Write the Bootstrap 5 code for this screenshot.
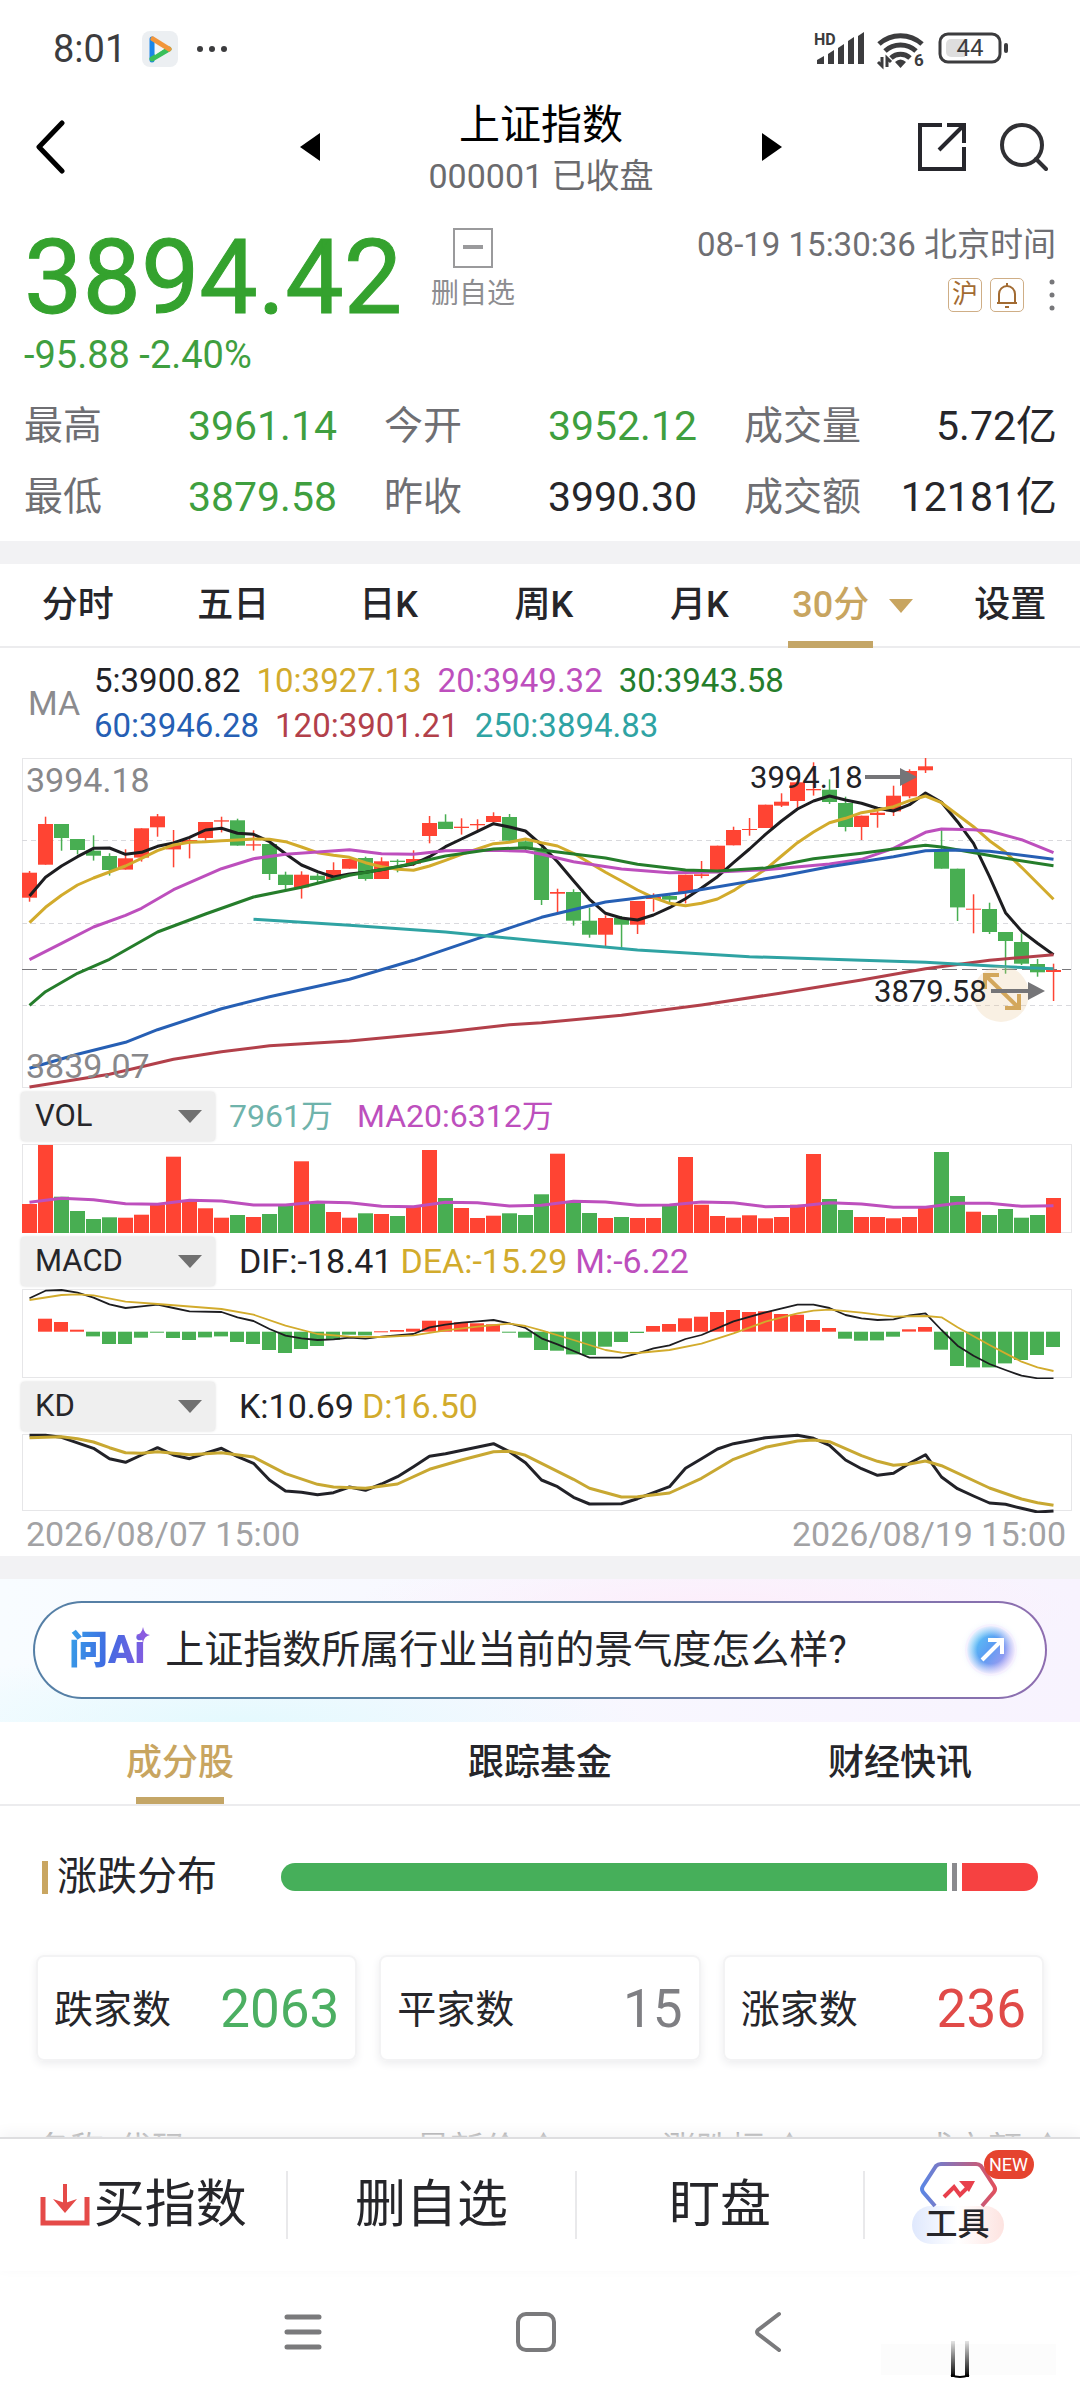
<!DOCTYPE html>
<html lang="zh-CN">
<head>
<meta charset="utf-8">
<meta name="viewport" content="width=device-width, initial-scale=1">
<title>上证指数 000001</title>
<link href="https://cdn.jsdelivr.net/npm/bootstrap@5.3.0/dist/css/bootstrap.min.css" rel="stylesheet">
<style>
  :root { --up:#ff4433; --down:#48ae52; --quote:#34a22e; --gold:#c8a560; --ink:#26262a; --muted2:#6f6f73; }
  body { font-family: Roboto, "Noto Sans CJK SC", sans-serif; color: var(--ink); background: #fff; }
  button, select { font-family: inherit; }
  button { background: none; border: 0; padding: 0; color: inherit; }
  a { color: inherit; text-decoration: none; }
  svg { display: block; }
  .statusbar { height: 98px; padding: 0 70px 0 53px; font-size: 38px; color: #3c3c3e; }
  .statusbar svg { overflow: visible; }
  .topbar { display: grid; grid-template-columns: 1fr 482px 1fr; grid-template-rows: 98px; height: 98px; padding: 0 32px 0 34px; }
  .title-block { padding-top: 4px; }
  .title-main { font-size: 41px; line-height: 54px; color: #000; font-weight: 400; margin: 0; }
  .title-sub { font-size: 34px; line-height: 48px; color: #6b6b6e; }
  .quote { padding: 24px 0 8px; }
  .quote-top { padding: 0 24px; }
  .price { font-size: 104px; line-height: 116px; font-weight: 400; color: var(--quote); -webkit-text-stroke: 1px var(--quote); min-width: 407px; }
  .change { font-size: 38px; line-height: 38px; color: #3f9f3f; }
  .mini-btn { font-size: 28px; line-height: 36px; color: #8d8d90; }
  .stamp { font-size: 33px; line-height: 50px; color: var(--muted2); }
  .tagbox { width: 34px; height: 34px; border: 1px solid #cfae86; border-radius: 5px; color: #a26b32; font-size: 26px; line-height: 30px; }
  .stats { margin-top: 17px; line-height: 71px; }
  .stats .cell { padding: 0 23px 0 24px; font-size: 39px; color: var(--muted2); }
  .stats b { font-weight: 400; font-size: 41px; color: var(--ink); }
  .stats b.dn { color: #3f9f3f; }
  .band { height: 23px; background: #f2f2f4; }
  .tabstrip { height: 84px; border-bottom: 2px solid #ececee; font-size: 36px; font-weight: 500; }
  .tabstrip .tab { flex: 1 1 0; height: 84px; }
  .tabstrip .lbl { height: 84px; line-height: 82px; padding: 0 4px; }
  .tabstrip.wide .tab.lbl { padding: 0; }
  .tabstrip .end { text-indent: 16px; }
  .tabstrip .on { color: var(--gold); border-bottom: 7px solid #c4a667; }
  .tabstrip .short { width: 88px; height: 7px; background: #c4a667; margin-top: -9px; }
  .tri { width: 0; height: 0; border: 12px solid transparent; border-top: 14px solid var(--gold); border-bottom: 0; }
  .legend-row { padding: 10px 28px 9px; line-height: 45px; font-size: 33px; }
  .legend-row .ma { width: 66px; color: #8b8b8e; font-size: 34px; }
  .c5 { color: #222226; } .c10 { color: #d2ab2c; } .c20 { color: #bd4fbd; } .c30 { color: #257d2b; }
  .c60 { color: #265fb4; } .c120 { color: #b2404a; } .c250 { color: #2fa3a3; } .cv { color: #6fb3ab; }
  .ind { height: 54px; padding-left: 21px; font-size: 34px; }
  .ind.tight { font-size: 32px; }
  .picker { position: relative; width: 194px; margin-right: 24px; }
  .tight .picker { margin-right: 14px; }
  .picker .form-select { height: 49px; border: 0; border-radius: 4px; background: #efefef; font-size: 31px; line-height: 40px; padding: 4px 14px; color: var(--ink); box-shadow: 0 0 3px #d8d8d8; appearance: none; }
  .picker::after { content: ""; position: absolute; right: 13px; top: 18px; border: 12px solid transparent; border-top: 13px solid #707070; border-bottom: 0; pointer-events: none; }
  .dates { padding: 0 14px 0 26px; font-size: 34px; line-height: 43px; color: #a2a2a4; }
  .chart text { font-size: 34px; }
  .chart text.note { font-size: 31px; }
  .ai { padding: 22px 33px 23px; background: radial-gradient(ellipse at 22% 100%, #e4f9fe 0, transparent 34%), radial-gradient(ellipse at 66% 20%, #fdeefb 0, transparent 36%), linear-gradient(90deg, #f8fcff, #f8f3fe); }
  .pill { height: 98px; border: 2px solid transparent; border-radius: 49px; background: linear-gradient(#fff, #fff) padding-box, linear-gradient(90deg, #557fa6, #5d87a4 50%, #8e6db0) border-box; padding: 0 22px 0 34px; font-size: 39px; }
  .ailogo { position: relative; font-size: 39px; font-weight: 900; background: linear-gradient(100deg, #36a3e8, #3f6be2 50%, #8a5be0); -webkit-background-clip: text; background-clip: text; color: transparent; margin-right: 20px; }
  .ailogo svg { position: absolute; right: -5px; top: 6px; }
  .dist { padding: 46px 42px 0; font-size: 40px; line-height: 50px; }
  .dist h2 { font-size: 40px; line-height: 50px; font-weight: 400; width: 239px; margin: 0; }
  .dist h2::before { content: ""; display: inline-block; width: 6px; height: 33px; background: #c9a661; margin-right: 9px; vertical-align: -4px; }
  .meter { height: 28px; gap: 5px; margin-right: 0; }
  .meter span { flex-basis: 0; }
  .counts { margin-top: 53px; padding: 0 36px; gap: 22px; }
  .count { flex: 1 1 0; height: 106px; border: 2px solid #f3f3f4; border-radius: 8px; box-shadow: 0 3px 8px #ededef; padding: 4px 16px 0 16px; font-size: 39px; }
  .count strong { font-size: 53px; font-weight: 400; }
  .listhead { margin-top: 63px; padding: 0 10px 0 36px; font-size: 34px; line-height: 50px; color: #77777a; display: grid; grid-template-columns: 380px 246px 1fr 150px; white-space: nowrap; }
  .actions { height: 134px; border-top: 2px solid #dedee0; box-shadow: 0 -4px 14px #f4f4f5; font-size: 51px; position: relative; background: #fff; }
  .actions .act { width: 26.7%; height: 68px; border-right: 2px solid #e9e9eb; }
  .actions .tools { flex: 1 1 0; height: 132px; padding: 0 30px 4px 0; }
  .toolword { width: 92px; height: 38px; border-radius: 19px; background: linear-gradient(90deg, #dfe8fd, #fff 50%, #fde3e0); font-size: 32px; line-height: 36px; font-weight: 500; margin-top: -2px; }
  .toolicon { position: relative; width: 92px; }
  .newtag { position: absolute; left: 72px; top: -12px; width: 50px; height: 29px; border-radius: 15px; background: #e5432f; color: #fff; font-size: 18px; line-height: 29px; }
  .sysnav { height: 129px; gap: 192px; padding: 0 8px 8px 0; position: relative; }
  .smudge { position: absolute; right: 24px; top: 70px; }
</style>
<script src="https://cdn.jsdelivr.net/npm/bootstrap@5.3.0/dist/js/bootstrap.bundle.min.js"></script>
</head>
<body>
<div class="vh-100 d-flex flex-column overflow-hidden">
<main class="flex-fill overflow-hidden">

  <div class="statusbar d-flex align-items-center">
    <span>8:01</span>
    <svg class="ms-3" width="36" height="36" viewBox="0 0 36 36"><rect width="36" height="36" rx="8" fill="#eceff2"/><path d="M10 8v21" stroke="#1b86e8" stroke-width="5" stroke-linecap="round"/><path d="M10 28 27 18" stroke="#39bf5a" stroke-width="5" stroke-linecap="round"/><path d="M11 8 27 18" stroke="#f2953a" stroke-width="5" stroke-linecap="round"/><path d="M13 13v11l9-6z" fill="#f4f6f8"/></svg>
    <svg class="ms-3" width="36" height="8" viewBox="0 0 36 8" fill="#3c3c3e"><circle cx="6" cy="4" r="3"/><circle cx="18" cy="4" r="3"/><circle cx="30" cy="4" r="3"/></svg>
    <svg class="ms-auto" width="196" height="38" viewBox="0 0 196 38">
      <g fill="#3c3c3e"><text x="0" y="15" font-size="16" font-weight="700">HD</text>
      <path d="M3 30l7-4v8H3zM14 24l6-4v14h-6zM24 18l6-4v20h-6zM34 11l6-4v27h-6zM44 6l6-4v32h-6z"/></g>
      <g fill="none" stroke="#3c3c3e" stroke-width="5"><path d="M65 14a32 32 0 0 1 43 0M71 21a23 23 0 0 1 31 0M77 28a14 14 0 0 1 19 0"/></g>
      <path d="M81 32q5.500-5 11 0l-5.500 6z" fill="#3c3c3e"/><path d="M68 27v9l-4-4M73 37v-9l4 4" stroke="#3c3c3e" stroke-width="3" fill="none"/>
      <text x="100" y="36" font-size="17" font-weight="700" fill="#3c3c3e">6</text>
      <rect x="126" y="4" width="60" height="28" rx="8" fill="none" stroke="#3c3c3e" stroke-width="3"/><path d="M137 9h14v18h-14a5 5 0 0 1-5-5v-8a5 5 0 0 1 5-5z" fill="#dedede"/>
      <rect x="190" y="13" width="4" height="10" rx="2" fill="#3c3c3e"/><text x="156" y="26" font-size="24" text-anchor="middle" fill="#3c3c3e">44</text>
    </svg>
  </div>

  <header class="topbar align-items-center">
    <button aria-label="返回" class="text-start"><svg width="32" height="54" viewBox="0 0 32 54"><path d="M28 3 5 27l23 24" fill="none" stroke="#000" stroke-width="5" stroke-linecap="round" stroke-linejoin="round"/></svg></button>
    <div class="d-flex justify-content-between align-items-center">
      <button aria-label="上一个"><svg width="20" height="28" viewBox="0 0 20 28"><path d="M20 0v28L0 14z"/></svg></button>
      <div class="title-block text-center"><h1 class="title-main">上证指数</h1><div class="title-sub">000001 已收盘</div></div>
      <button aria-label="下一个"><svg width="20" height="28" viewBox="0 0 20 28"><path d="M0 0v28l20-14z"/></svg></button>
    </div>
    <div class="d-flex justify-content-end align-items-center">
      <button aria-label="分享" class="me-4"><svg width="50" height="50" viewBox="0 0 50 50" fill="none" stroke="#26262c" stroke-width="4"><path d="M25 3H3v44h44V25M30 3h17v18M46 4 22 28"/></svg></button>
      <button aria-label="搜索" class="ms-2"><svg width="49" height="50" viewBox="0 0 49 50" fill="none" stroke="#303034" stroke-width="4"><circle cx="23" cy="23" r="20"/><path d="m37 37 10 10" stroke-linecap="round"/></svg></button>
    </div>
  </header>

  <section class="quote">
    <div class="quote-top d-flex align-items-start">
      <div>
        <div class="price">3894.42</div>
        <div class="change">-95.88 -2.40%</div>
      </div>
      <button class="mini-btn d-flex flex-column align-items-center pt-2"><svg width="40" height="40" viewBox="0 0 40 40"><rect x="1" y="1" width="38" height="38" fill="#fff" stroke="#9a9a9c" stroke-width="2"/><path d="M10 19h20" stroke="#9a9a9c" stroke-width="4"/></svg><span class="mt-2">删自选</span></button>
      <div class="ms-auto">
        <div class="stamp">08-19 15:30:36 北京时间</div>
        <div class="d-flex justify-content-end align-items-center pt-2">
          <span class="tagbox text-center me-2">沪</span>
          <button class="tagbox" aria-label="提醒"><svg width="32" height="32" viewBox="0 0 32 32" fill="none" stroke="#a26b32" stroke-width="2"><path d="M6 24h20M8 24V15a8 8 0 0 1 16 0v9M16 7V4M14 28h4"/></svg></button>
          <button aria-label="更多" class="ms-4"><svg width="8" height="34" viewBox="0 0 8 34" fill="#77777a"><circle cx="4" cy="4" r="2.500"/><circle cx="4" cy="17" r="2.500"/><circle cx="4" cy="30" r="2.500"/></svg></button>
        </div>
      </div>
    </div>
    <div class="stats row g-0">
      <div class="cell col-4 d-flex justify-content-between"><span>最高</span><b class="dn">3961.14</b></div>
      <div class="cell col-4 d-flex justify-content-between"><span>今开</span><b class="dn">3952.12</b></div>
      <div class="cell col-4 d-flex justify-content-between"><span>成交量</span><b>5.72亿</b></div>
      <div class="cell col-4 d-flex justify-content-between"><span>最低</span><b class="dn">3879.58</b></div>
      <div class="cell col-4 d-flex justify-content-between"><span>昨收</span><b>3990.30</b></div>
      <div class="cell col-4 d-flex justify-content-between"><span>成交额</span><b>12181亿</b></div>
    </div>
  </section>
  <div class="band"></div>

  <nav class="tabstrip d-flex">
    <a href="#" class="tab text-center lbl">分时</a>
    <a href="#" class="tab text-center lbl">五日</a>
    <a href="#" class="tab text-center lbl">日K</a>
    <a href="#" class="tab text-center lbl">周K</a>
    <a href="#" class="tab text-center lbl">月K</a>
    <a href="#" class="tab d-flex align-items-center justify-content-center"><span class="lbl on">30分</span><span class="tri ms-3"></span></a>
    <a href="#" class="tab text-center lbl end">设置</a>
  </nav>

  <div class="legend-row d-flex align-items-center">
    <span class="ma">MA</span>
    <div>
      <div class="d-flex gap-3"><span class="c5">5:3900.82</span><span class="c10">10:3927.13</span><span class="c20">20:3949.32</span><span class="c30">30:3943.58</span></div>
      <div class="d-flex gap-3"><span class="c60">60:3946.28</span><span class="c120">120:3901.21</span><span class="c250">250:3894.83</span></div>
    </div>
  </div>

  <svg class="chart w-100" id="kline" viewBox="0 757 1080 332" role="img" aria-label="30分钟K线"></svg>

  <div class="ind tight d-flex align-items-center">
    <div class="picker"><select class="form-select" aria-label="指标一"><option>VOL</option></select></div>
    <span class="cv me-4">7961万</span><span class="c20">MA20:6312万</span>
  </div>
  <svg class="chart w-100" id="vol" viewBox="0 1143 1080 91" role="img" aria-label="成交量"></svg>

  <div class="ind d-flex align-items-center">
    <div class="picker"><select class="form-select" aria-label="指标二"><option>MACD</option></select></div>
    <span class="c5 me-2">DIF:-18.41</span><span class="c10 me-2">DEA:-15.29</span><span class="c20">M:-6.22</span>
  </div>
  <svg class="chart w-100" id="macd" viewBox="0 1288 1080 91" role="img" aria-label="MACD"></svg>

  <div class="ind d-flex align-items-center">
    <div class="picker"><select class="form-select" aria-label="指标三"><option>KD</option></select></div>
    <span class="c5 me-2">K:10.69</span><span class="c10">D:16.50</span>
  </div>
  <svg class="chart w-100" id="kd" viewBox="0 1433 1080 80" role="img" aria-label="KD"></svg>

  <div class="dates d-flex justify-content-between"><span>2026/08/07 15:00</span><span>2026/08/19 15:00</span></div>
  <div class="band"></div>

  <section class="ai">
    <a href="#" class="pill d-flex align-items-center">
      <span class="ailogo">问Ai<svg width="14" height="16" viewBox="0 0 14 16"><path d="M7 0q1 7 7 8-6 1-7 8-1-7-7-8 6-1 7-8z" fill="#8a5be0"/></svg></span>
      <span>上证指数所属行业当前的景气度怎么样?</span>
      <svg class="ms-auto" width="64" height="72" viewBox="0 0 64 72">
        <defs><linearGradient id="orbA" x1="0" y1=".2" x2="1" y2=".9"><stop offset="0" stop-color="#5ad0f8"/><stop offset=".45" stop-color="#5c9cf2"/><stop offset="1" stop-color="#c79bf0"/></linearGradient>
        <radialGradient id="orbF"><stop offset=".55" stop-color="#fff" stop-opacity="0"/><stop offset="1" stop-color="#f6f1fe"/></radialGradient>
        <radialGradient id="halo"><stop offset=".5" stop-color="#cfe4fb"/><stop offset="1" stop-color="#fff" stop-opacity="0"/></radialGradient></defs>
        <circle cx="32" cy="36" r="32" fill="url(#halo)"/><circle cx="32" cy="36" r="26" fill="#f6f1fe"/><circle cx="32" cy="36" r="24" fill="url(#orbA)"/><circle cx="32" cy="36" r="25" fill="url(#orbF)"/>
        <path d="M23 46 41 28M29 26h14v14" fill="none" stroke="#fff" stroke-width="4"/>
      </svg>
    </a>
  </section>

  <nav class="tabstrip wide d-flex">
    <a href="#" class="tab d-flex flex-column align-items-center" style="color:var(--gold)"><span class="lbl">成分股</span><span class="short"></span></a>
    <a href="#" class="tab text-center lbl">跟踪基金</a>
    <a href="#" class="tab text-center lbl">财经快讯</a>
  </nav>

  <section class="dist d-flex align-items-center">
    <h2>涨跌分布</h2>
    <div class="meter d-flex flex-fill rounded-pill overflow-hidden">
      <span style="flex-grow:2063;background:#46af5a"></span><span style="flex-grow:15;background:#8a8a8e"></span><span style="flex-grow:236;background:#f64141"></span>
    </div>
  </section>
  <section class="counts d-flex">
    <div class="count d-flex align-items-center justify-content-between"><span>跌家数</span><strong style="color:#4caf62">2063</strong></div>
    <div class="count d-flex align-items-center justify-content-between"><span>平家数</span><strong style="color:#7f7f83">15</strong></div>
    <div class="count d-flex align-items-center justify-content-between"><span>涨家数</span><strong style="color:#e04a48">236</strong></div>
  </section>
  <div class="listhead"><span>名称/代码</span><span>最新价 ♦</span><span>涨跌幅 ♦</span><span>成交额 ♦</span></div>
</main>

<footer>
  <div class="actions d-flex align-items-center">
    <button class="act d-flex align-items-center justify-content-center"><svg width="50" height="42" viewBox="0 0 50 42"><path d="M3 13v26h44V13" fill="none" stroke="#e54a48" stroke-width="5"/><path d="M25 0v20" stroke="#e54a48" stroke-width="4"/><path d="M13 15l12 4 12-4-12 14z" fill="#e54a48"/></svg><span class="ms-1">买指数</span></button>
    <button class="act d-flex align-items-center justify-content-center">删自选</button>
    <button class="act d-flex align-items-center justify-content-center">盯盘</button>
    <button class="tools d-flex flex-column align-items-center justify-content-center">
      <span class="toolicon"><svg class="mx-auto" width="78" height="46" viewBox="0 0 78 46">
        <defs><linearGradient id="hexg"><stop offset="0" stop-color="#5b86e4"/><stop offset="1" stop-color="#e0505e"/></linearGradient></defs>
        <path d="M16 44 4 30q-2-3 0-6L17 4q2-2 5-2h35q3 0 5 2l13 20q2 3 0 6L63 44" fill="none" stroke="url(#hexg)" stroke-width="4"/>
        <path d="M25 35l10-10 6 8 10-10" fill="none" stroke="#e8404c" stroke-width="4"/><path d="M40 19h16l-6 11z" fill="#e8404c"/></svg>
        <span class="newtag">NEW</span></span>
      <span class="toolword">工具</span>
    </button>
  </div>
  <div class="sysnav d-flex align-items-center justify-content-center">
    <button aria-label="最近任务"><svg width="40" height="40" viewBox="0 0 40 40" stroke="#7a7a7c" stroke-width="5" stroke-linecap="round"><path d="M4 5h32M4 20h32M4 35h32"/></svg></button>
    <button aria-label="主页"><svg width="42" height="42" viewBox="0 0 42 42"><rect x="3" y="3" width="36" height="36" rx="8" fill="none" stroke="#7a7a7c" stroke-width="4"/></svg></button>
    <button aria-label="后退"><svg width="40" height="42" viewBox="0 0 40 42"><path d="M30 3 9 19q-2 2 0 4l21 16" fill="none" stroke="#7a7a7c" stroke-width="4" stroke-linecap="round"/></svg></button>
    <svg class="smudge" width="175" height="38" viewBox="0 0 175 38"><defs><linearGradient id="ug" x1="0" y1="0" x2="0" y2="1"><stop offset="0" stop-color="#000" stop-opacity=".1"/><stop offset="1" stop-color="#000"/></linearGradient></defs>
      <path d="M0 3h175v31H0z" fill="#fcfcfc"/><path d="M70 0h4v36h-4zM84 0h4v36h-4z" fill="url(#ug)"/><path d="M70 34q9 4 18 0" fill="none" stroke="#000" stroke-width="2"/></svg>
  </div>
</footer>
</div>

<script>
// Bars are 16 units apart; vertical data is kept in thirds of a unit.
const X = i => 29.5 + 16 * i, F = n => n.toFixed(1);
const RED = '#ff4433', GREEN = '#48ae52';
const rect = (x, y, w, h, c) => `<rect x="${F(x)}" y="${F(y)}" width="${F(w)}" height="${F(Math.max(h, 1))}" fill="${c}"/>`;
const frame = (y, h) => `<rect x="22.500" y="${y}.500" width="1049" height="${h}" fill="none" stroke="#e6e6e8"/>`;
const line = (base, s, c, w) => '<polyline fill="none" stroke-linejoin="round" stroke="' + c + '" stroke-width="' + w + '" points="' +
  s.trim().split(/\s+/).map(p => { const [i, y] = p.split(',').map(Number); return F(X(i)) + ',' + F(base + y / 3); }).join(' ') + '"/>';
const seq = a => a.map((v, i) => i + ',' + v).join(' ');

// colour, top, bottom, high, low
const candles = `R698,773,693,785 R552,674,530,674 G552,594,552,632 G597,630,597,643 G632,647,586,662 G648,690,640,707 R655,689,628,689 R565,653,565,665 R529,562,522,590 R611,628,570,682 R600,608,596,655 R546,594,546,602 R541,545,530,577 G541,617,536,617 R613,617,571,632 G612,702,612,720 G704,735,695,750 R704,742,694,776 G707,720,700,728 R690,719,667,719 R657,686,657,686 G654,717,650,722 R664,717,652,717 G662,666,658,697 R657,671,631,678 R549,588,528,610 G545,567,523,567 R560,564,535,584 R552,556,538,572 R528,546,517,550 G531,602,522,602 G604,624,598,632 G632,780,620,795 R756,761,746,822 G756,842,748,857 G842,884,803,893 R834,884,826,918 G834,854,828,925 R783,854,783,882 R771,777,760,815 G768,779,764,788 R704,758,704,790 R703,708,663,715 R617,690,617,690 R570,616,560,616 R567,570,534,587 R494,564,494,564 R485,497,460,501 R427,483,427,505 R447,451,367,467 G449,486,418,492 G489,561,470,574 R527,561,527,600 R518,525,503,563 R467,514,437,528 R393,469,388,475 R379,391,354,399 G633,686,568,686 G686,802,686,843 R806,809,763,880 G807,876,788,882 G876,903,876,1001 G906,971,880,975 G972,997,957,1010 R990,996,971,1083`.split(' ');
const ma5 = [768,712,678,650,625,624,643,637,619,609,592,570,565,580,583,605,641,675,695,711,702,697,689,680,672,650,620,597,574,551,561,573,615,665,722,778,820,834,840,825,803,776,744,710,668,627,583,543,507,483,468,480,490,505,513,494,459,487,545,610,710,818,873,910,944];
const ma10 = [848,802,766,735,714,696,678,655,632,615,607,605,602,600,597,598,605,621,638,646,652,668,680,688,691,678,661,643,627,611,607,597,608,618,640,668,697,723,750,773,790,797,790,777,752,720,688,648,608,576,548,535,518,510,500,482,468,488,524,560,602,637,682,730,778];
let s = frame(758, 329);
for (const y of [840, 923, 1005]) s += `<path d="M22 ${y}.500h1049" stroke="#d9d9dd" stroke-dasharray="5 4"/>`;
s += '<path d="M22 969.500h1049" stroke="#77777b" stroke-dasharray="15 5"/>';
candles.forEach((k, i) => {
  const c = k[0] === 'R' ? RED : GREEN, [t, b, h, l] = k.slice(1).split(',').map(v => 640 + v / 3);
  s += rect(X(i) - .7, h, 1.5, l - h, c) + rect(X(i) - 7.5, t, 15, b - t, c);
});
s += line(640, seq(ma5), '#1d1d20', 3) + line(640, seq(ma10), '#d2ab2c', 3)
  + line(640, '0,959 2,910 4,861 6,826 7,805 9,749 12,686 14,656 16,643 20,629 22,641 24,643 26,632 29,631 31,634 32,643 34,665 37,687 40,698 43,696 46,689 50,672 52,658 54,625 56,577 57,567 59,569 60,573 62,599 64,638', '#bd4fbd', 3)
  + line(640, '0,1096 1,1055 3,1000 5,958 8,876 11,822 14,771 17,742 20,706 23,680 26,648 29,627 31,623 32,630 36,654 38,673 41,690 43,693 46,684 49,656 52,640 54,627 56,616 57,621 61,655 64,677', '#257d2b', 3)
  + line(640, '0,1285 3,1243 6,1207 8,1169 12,1106 15,1070 20,1018 24,961 28,896 32,832 36,786 41,757 47,708 50,680 54,650 56,632 58,630 60,634 64,658', '#265fb4', 3)
  + line(640, '0,1341 5,1303 9,1258 12,1235 15,1217 20,1203 26,1176 30,1154 32,1148 37,1126 42,1095 47,1059 52,1020 56,986 60,961 64,944', '#b2404a', 3)
  + line(640, '14,838 20,856 26,876 32,904 38,930 45,950 52,961 56,967 61,980 64,986', '#2fa3a3', 3);
s += '<circle cx="1001" cy="994" r="28" fill="#e6c58f" fill-opacity=".25"/><path d="M985 989v-14h14M985 975l34 33M1005 1008h14v-14" fill="none" stroke="#d3a75c" stroke-width="4"/>';
s += '<text x="26" y="792" fill="#88888b">3994.18</text><text x="26" y="1078" fill="#88888b">3839.07</text>';
s += '<text class="note" x="750" y="788" fill="#222226">3994.18</text><path d="M865 777h38" stroke="#757578" stroke-width="4"/><path d="M900 768v18l17-9z" fill="#757578"/>';
s += '<text class="note" x="874" y="1002" fill="#222226">3879.58</text><path d="M991 991h40" stroke="#757578" stroke-width="4"/><path d="M1028 982v18l17-9z" fill="#757578"/>';
kline.innerHTML = s;

const vols = 'R372 R195 G350 G393 G417 G412 R413 R404 R374 R230 R362 R385 R413 G405 R411 G402 G375 R244 G370 R396 R413 G400 R402 G408 R378 R210 G354 R384 R414 R407 G400 G405 G343 R221 G366 G399 R414 G411 R414 R414 G375 R231 R374 R408 R413 R406 R415 R411 R374 R222 G357 G390 R411 R411 R415 R411 R380 G216 G348 R395 G405 G387 G413 G405 R354'.split(' ');
s = frame(1144, 88);
vols.forEach((k, i) => { const y = 1080 + k.slice(1) / 3; s += rect(X(i) - 7.5, y, 15, 1233 - y, k[0] === 'R' ? RED : GREEN); });
s += line(1080, '0,367 2,355 4,359 6,371 8,373 10,361 12,363 14,375 16,375 18,366 20,368 22,379 24,380 26,367 28,368 30,378 32,376 34,364 36,366 38,376 40,375 42,366 44,368 46,380 48,379 50,368 52,372 54,382 56,382 58,370 60,370 62,379 64,377', '#bd4fbd', 3);
vol.innerHTML = s;

const hist = [755,716,726,749,769,792,792,773,758,774,780,772,769,786,792,810,819,807,798,780,764,766,754,750,746,722,722,727,730,733,758,773,810,812,823,825,800,786,759,738,732,715,710,696,690,696,694,702,704,720,744,776,782,781,770,748,741,809,858,862,862,850,840,825,801];
s = frame(1289, 88);
hist.forEach((v, i) => { if (i) s += rect(X(i) - 7.5, 1080 + Math.min(v, 755) / 3, 14, Math.abs(v - 755) / 3, v < 755 ? RED : GREEN); });
s += line(1080, '0,655 1,632 2,630 3,638 4,653 5,673 6,684 7,679 8,674 9,684 10,694 12,696 13,712 14,723 15,747 16,767 17,775 18,780 19,778 20,773 21,776 22,770 24,762 25,742 26,734 27,728 28,724 29,720 30,730 31,744 32,775 33,793 34,813 35,833 37,833 38,820 39,805 40,796 41,777 42,765 44,724 46,697 48,674 49,674 50,684 51,705 52,715 53,720 54,718 55,706 56,700 57,750 58,797 59,827 60,852 61,870 62,887 63,895 64,895', '#1d1d20', 1.8)
  + line(1080, '0,660 2,645 3,643 4,646 6,665 8,672 12,687 14,704 16,737 18,762 20,770 22,771 24,766 26,751 28,740 30,731 31,738 32,751 34,780 36,810 37,818 38,819 40,810 42,791 44,760 46,725 48,700 49,692 50,689 52,698 54,710 56,708 57,712 58,742 60,795 62,845 63,862 64,873', '#d2ab2c', 1.8);
macd.innerHTML = s;

s = frame(1434, 76)
  + line(1080, '0,1066 1,1066 2,1072 4,1105 5,1136 6,1147 7,1125 8,1103 9,1125 10,1136 11,1120 12,1105 13,1130 14,1150 15,1200 16,1233 17,1237 18,1244 19,1238 20,1221 21,1231 22,1212 23,1190 24,1160 25,1129 26,1121 29,1091 30,1115 31,1148 32,1200 33,1220 34,1252 35,1272 37,1271 38,1256 40,1220 41,1165 42,1136 43,1107 44,1091 46,1073 48,1066 49,1075 50,1096 51,1140 52,1166 53,1186 54,1180 55,1150 56,1124 57,1191 58,1226 59,1248 60,1269 61,1273 62,1285 63,1296 64,1293', '#222228', 3)
  + line(1080, '0,1073 2,1070 3,1076 4,1086 5,1103 6,1118 7,1120 8,1115 10,1124 12,1118 14,1131 16,1181 18,1213 19,1221 21,1225 23,1212 25,1168 27,1140 29,1115 30,1114 31,1126 32,1150 34,1198 35,1225 37,1251 38,1250 40,1239 42,1195 44,1138 46,1102 48,1083 49,1080 50,1085 52,1127 53,1144 54,1156 55,1152 56,1143 57,1157 60,1224 62,1257 63,1268 64,1276', '#c8a832', 3);
kd.innerHTML = s;
</script>
</body>
</html>
